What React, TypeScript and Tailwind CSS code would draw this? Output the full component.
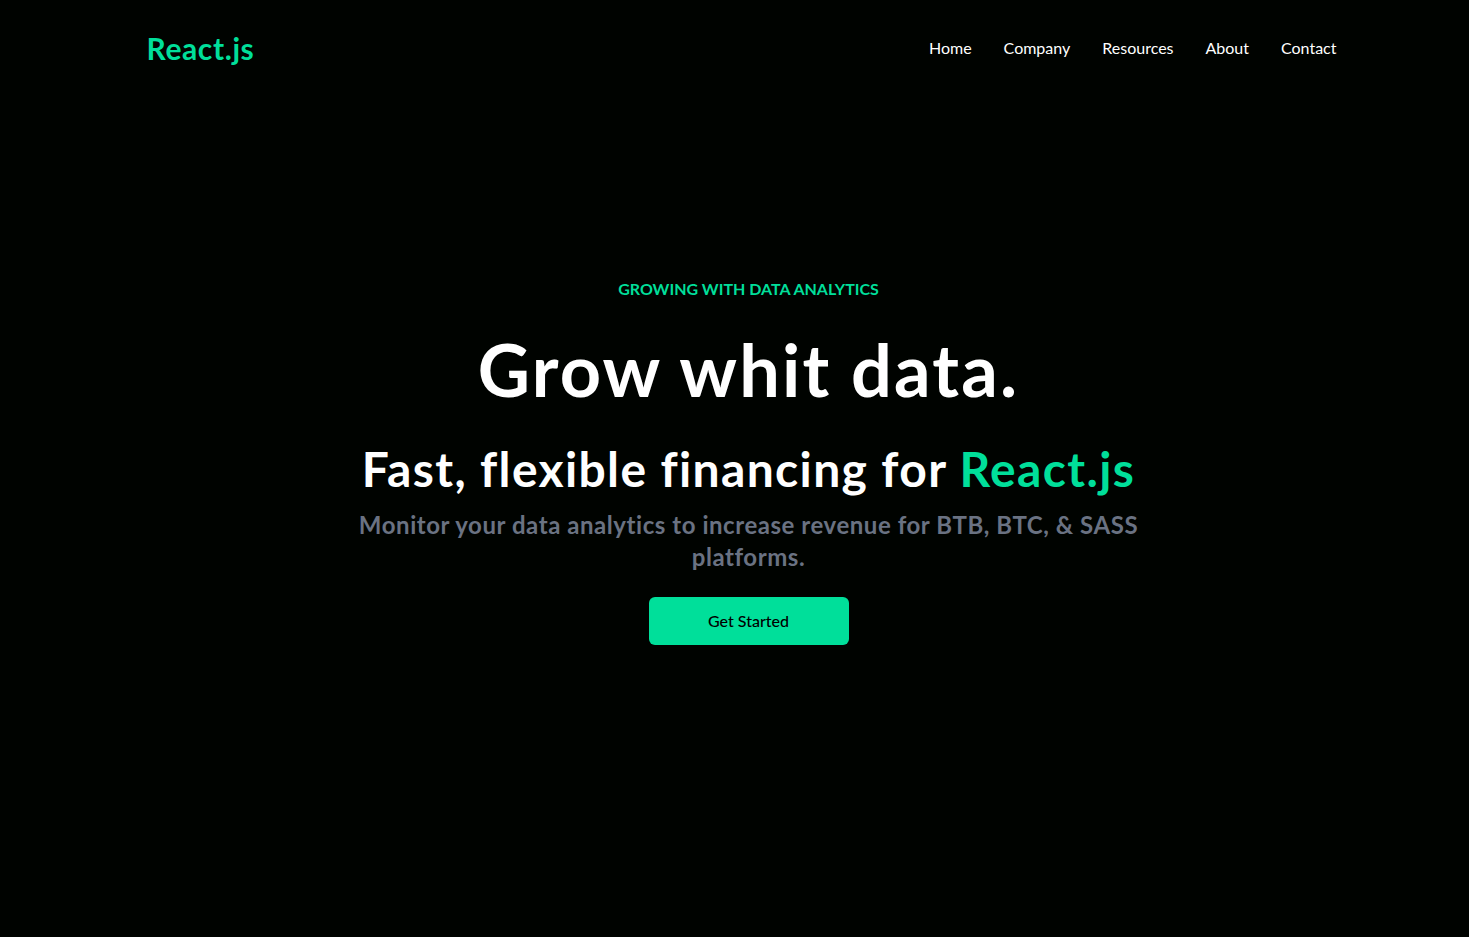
export default function App() {
  return (
    <div
      className="w-full min-h-screen bg-[#000300] text-white"
      style={{ fontFamily: 'Lato, "Noto Sans", sans-serif' }}
    >
      <div className="flex justify-between items-center h-24 max-w-[1240px] mx-auto pl-8 pr-0.5">
        <h1 className="text-3xl font-bold tracking-[0.02em] text-[#00df9a]">React.js</h1>
        <ul className="flex text-base">
          <li className="p-4">Home</li>
          <li className="p-4">Company</li>
          <li className="p-4">Resources</li>
          <li className="p-4">About</li>
          <li className="p-4">Contact</li>
        </ul>
      </div>

      <div className="pl-[28px]">
        <div className="max-w-[800px] mt-[-96px] w-full h-screen mx-auto text-center flex flex-col justify-center">
          <p className="text-[#00df9a] font-bold p-2 text-base">
            GROWING WITH DATA ANALYTICS
          </p>
          <h1 className="text-7xl font-bold tracking-[0.03em] py-6">Grow whit data.</h1>
          <div className="flex justify-center items-center whitespace-nowrap">
            <p className="text-5xl font-bold tracking-[1.36px] py-4">Fast, flexible financing for</p>
            <p className="text-5xl font-bold tracking-[1.36px] pl-3 text-[#00df9a]">React.js</p>
          </div>
          <p className="text-2xl font-bold tracking-[0.023em] text-gray-500">
            Monitor your data analytics to increase revenue for BTB, BTC, &amp; SASS platforms.
          </p>
          <button className="bg-[#00df9a] w-[200px] rounded-md font-medium my-6 mx-auto py-3 text-black">
            Get Started
          </button>
        </div>
      </div>
    </div>
  );
}
